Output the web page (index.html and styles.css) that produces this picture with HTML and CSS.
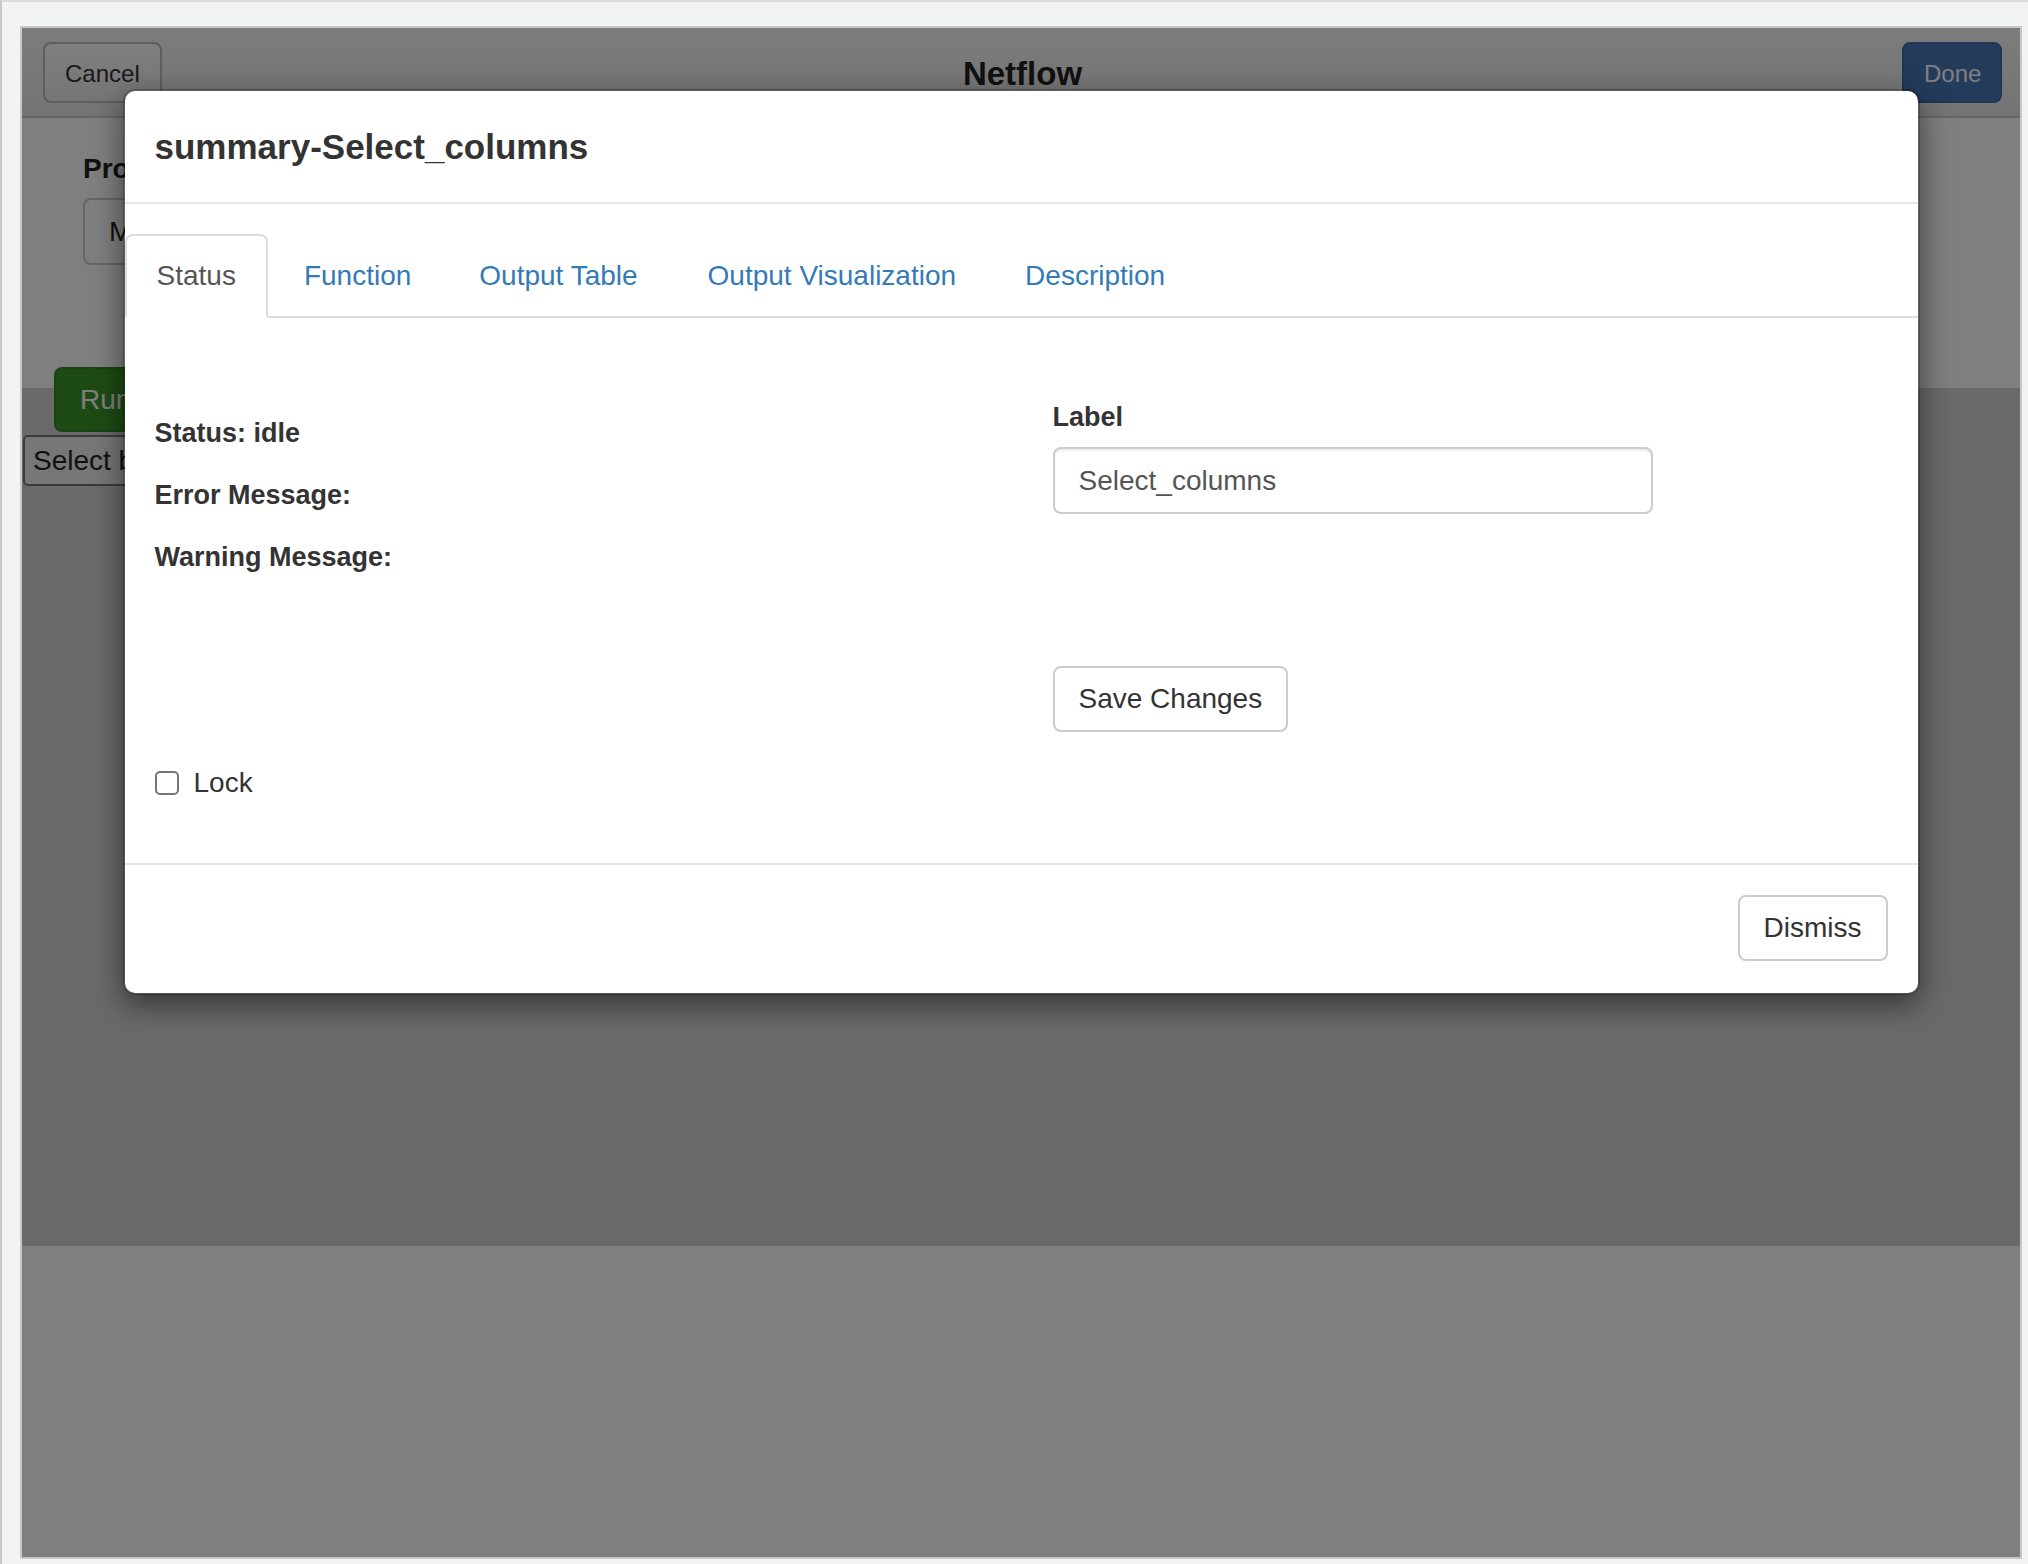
FILE: index.html
```html
<!DOCTYPE html>
<html>
<head>
<meta charset="utf-8">
<title>Netflow</title>
<link rel="stylesheet" href="styles.css">
</head>
<body>
<div class="shell">
  <div class="frame">
    <div class="page">
      <header class="topbar">
        <div class="topbar-left"><button class="btn-page">Cancel</button></div>
        <div class="topbar-title">Netflow</div>
        <div class="topbar-right"><button class="btn-page btn-done">Done</button></div>
      </header>
      <div class="form-area">
        <div class="page-label">Project</div>
        <div class="page-select">My project</div>
      </div>
      <div class="canvas-area">
        <button class="btn-run">Run</button>
        <div class="block-select">Select block</div>
      </div>
      <div class="page-rest"></div>
    </div>
    <div class="backdrop"></div>
    <div class="modal">
      <div class="modal-content">
        <div class="modal-header">
          <h4 class="modal-title">summary-Select_columns</h4>
        </div>
        <div class="modal-body">
          <ul class="nav-tabs">
            <li class="active"><a>Status</a></li>
            <li><a>Function</a></li>
            <li><a>Output Table</a></li>
            <li><a>Output Visualization</a></li>
            <li><a>Description</a></li>
          </ul>
          <div class="pane">
            <div class="col-left">
              <div class="stat stat-first">Status: idle</div>
              <div class="stat">Error Message:</div>
              <div class="stat">Warning Message:</div>
              <label class="lock-row"><input type="checkbox" class="check"><span>Lock</span></label>
            </div>
            <div class="col-right">
              <div class="field-label">Label</div>
              <input class="text-input" type="text" value="Select_columns">
              <button class="btn btn-save">Save Changes</button>
            </div>
          </div>
        </div>
        <div class="modal-footer">
          <button class="btn">Dismiss</button>
        </div>
      </div>
    </div>
  </div>
</div>
</body>
</html>
```

FILE: styles.css
```css
* { box-sizing: border-box; }

html, body {
  margin: 0;
  padding: 0;
  background: #f2f4f3;
  font-family: "Liberation Sans", Arial, sans-serif;
  color: #333;
}

.shell {
  width: 2028px;
  height: 1564px;
  border-top: 2px solid #d9dbde;
  border-left: 2px solid #c6c7c8;
  padding: 24px 0 0 18px;
  overflow: hidden;
}

.frame {
  position: relative;
  width: 2002px;
  height: 1533px;
  border: 2px solid #c8c8c8;
  overflow: hidden;
  background: #fff;
}

.page {
  display: flex;
  flex-direction: column;
  height: 100%;
}

/* underlying page (covered by the modal backdrop) */
.topbar {
  height: 90px;
  flex: none;
  display: grid;
  grid-template-columns: 1fr auto 1fr;
  align-items: center;
  padding: 0 18px 0 21px;
  background: linear-gradient(#f8f8f8, #e9e9e9);
  border-bottom: 2px solid #cfcfcf;
}

.topbar-right { justify-self: end; }

.topbar-title {
  padding-top: 4px;
  font-size: 33px;
  font-weight: bold;
  color: #222;
}

.btn-page {
  height: 61px;
  padding: 3px 20px 0;
  font-family: inherit;
  font-size: 24px;
  color: #333;
  background: linear-gradient(#ffffff, #ececec);
  border: 2px solid #bcbcbc;
  border-radius: 8px;
}

.btn-done {
  width: 100px;
  color: #fff;
  background: #4678b8;
  border-color: #3f6da8;
}

.form-area {
  flex: none;
  height: 270px;
  padding: 31px 0 0 61px;
}

.page-label {
  width: 42px;
  overflow: hidden;
  white-space: nowrap;
  font-size: 28px;
  line-height: 40px;
  font-weight: bold;
  color: #222;
  margin-bottom: 9px;
}

.page-select {
  width: 52px;
  height: 67px;
  overflow: hidden;
  white-space: nowrap;
  border: 2px solid #cccccc;
  border-radius: 8px;
  padding: 0 0 0 24px;
  font-size: 28px;
  line-height: 63px;
  color: #222;
}

.canvas-area {
  flex: none;
  height: 858px;
  background: #d4d4d4;
  padding-left: 1px;
}

.btn-run {
  display: block;
  width: 82px;
  margin: -21px 0 0 31px;
  height: 65px;
  padding: 0 0 0 24px;
  overflow: hidden;
  white-space: nowrap;
  text-align: left;
  font-family: inherit;
  font-size: 28px;
  color: #fff;
  background: #3c9628;
  border: 2px solid #34862a;
  border-radius: 8px;
}

.block-select {
  width: 112px;
  height: 51px;
  margin-top: 3px;
  padding: 0 0 0 8px;
  overflow: hidden;
  white-space: nowrap;
  font-size: 28px;
  line-height: 47px;
  color: #222;
  background: #efefef;
  border: 2px solid #767676;
  border-radius: 5px;
}

.page-rest {
  flex: 1;
  background: #fff;
}

.backdrop {
  position: absolute;
  inset: 0;
  background: rgba(0, 0, 0, 0.5);
}

/* modal */
.modal {
  position: absolute;
  top: 0;
  left: 0;
  right: 0;
}

.modal-content {
  width: 1797px;
  margin: 61px auto 0;
  background: #fff;
  background-clip: padding-box;
  border: 2px solid rgba(0, 0, 0, 0.2);
  border-radius: 12px;
  box-shadow: 0 10px 30px rgba(0, 0, 0, 0.5);
}

.modal-header {
  padding: 30px;
  border-bottom: 2px solid #e5e5e5;
}

.modal-title {
  margin: 0;
  font-size: 35px;
  line-height: 51px;
  font-weight: bold;
  color: #333;
}

.modal-body {
  padding: 30px 0;
}

.nav-tabs {
  display: flex;
  list-style: none;
  margin: 0;
  padding: 0;
  border-bottom: 2px solid #dddddd;
}

.nav-tabs li {
  margin: 0 4px -2px 0;
}

.nav-tabs a {
  display: block;
  padding: 20px 30px;
  font-size: 28px;
  line-height: 40px;
  color: #337ab7;
  border: 2px solid transparent;
  border-radius: 8px 8px 0 0;
}

.nav-tabs li:nth-child(3) a { padding-right: 32px; }
.nav-tabs li:nth-child(4) a { padding-right: 31px; }

.nav-tabs .active a {
  color: #555;
  background: #fff;
  border-color: #dddddd #dddddd transparent;
}

.pane {
  display: grid;
  grid-template-columns: 838px 1fr;
  column-gap: 60px;
  height: 515px;
  padding: 0 30px;
}

.stat {
  font-size: 27px;
  line-height: 40px;
  font-weight: bold;
  color: #333;
  margin-bottom: 22px;
}

.stat-first { margin-top: 95px; }

.lock-row {
  display: flex;
  align-items: center;
  height: 40px;
  margin-top: 186px;
  font-size: 28px;
  color: #333;
}

.check {
  appearance: none;
  -webkit-appearance: none;
  width: 24px;
  height: 24px;
  margin: 0 15px 0 0;
  border: 2px solid #767676;
  border-radius: 5px;
  background: #fff;
}

.field-label {
  margin-top: 79px;
  margin-bottom: 10px;
  font-size: 27px;
  line-height: 40px;
  font-weight: bold;
  color: #333;
}

.text-input {
  display: block;
  width: 600px;
  height: 67px;
  padding: 0 24px;
  font-family: inherit;
  font-size: 28px;
  color: #555;
  background: #fff;
  border: 2px solid #cccccc;
  border-radius: 8px;
  box-shadow: inset 0 2px 2px rgba(0, 0, 0, 0.075);
}

.btn {
  height: 66px;
  padding: 0 24px;
  font-family: inherit;
  font-size: 28px;
  color: #333;
  background: #fff;
  border: 2px solid #cccccc;
  border-radius: 8px;
}

.btn-save {
  display: block;
  margin-top: 152px;
}

.modal-footer {
  display: flex;
  justify-content: flex-end;
  padding: 30px 30px 32px;
  border-top: 2px solid #e5e5e5;
}
```
